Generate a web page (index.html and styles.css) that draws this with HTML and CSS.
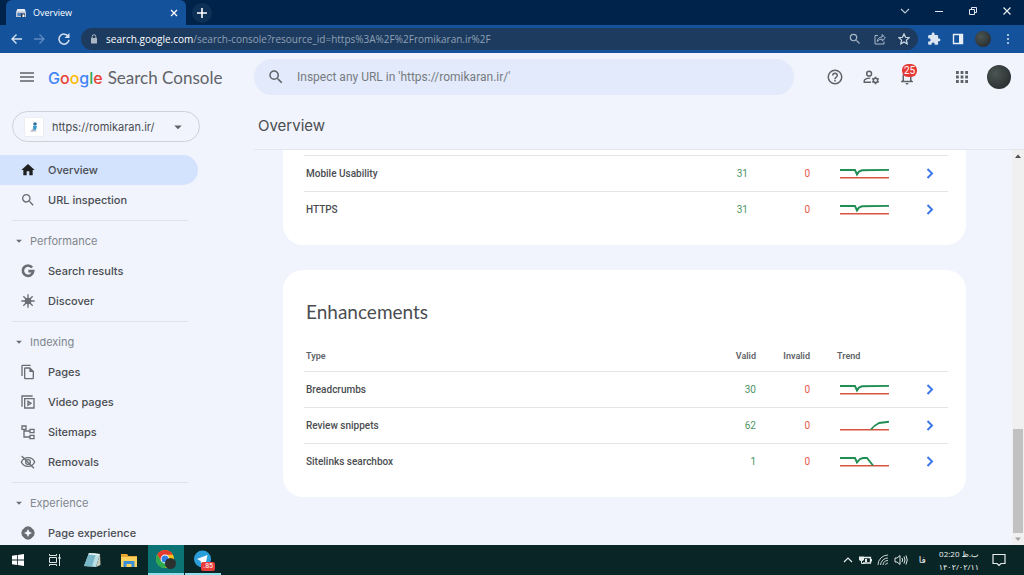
FILE: index.html
```html
<!DOCTYPE html>
<html lang="en">
<head>
<meta charset="utf-8">
<title>Overview</title>
<link rel="stylesheet" href="styles.css">
</head>
<body>
<svg class="defs" aria-hidden="true">
  <symbol id="search" viewBox="0 0 24 24"><path d="M15.5 14h-.79l-.28-.27A6.47 6.47 0 0 0 16 9.5 6.5 6.5 0 1 0 9.5 16c1.61 0 3.09-.59 4.23-1.57l.27.28v.79l5 4.99L20.49 19l-4.99-5zm-6 0C7.01 14 5 11.99 5 9.5S7.01 5 9.5 5 14 7.01 14 9.5 11.99 14 9.5 14z"/></symbol>
  <symbol id="caret" viewBox="0 0 24 24"><path d="M7 10l5 5 5-5z"/></symbol>
  <symbol id="chevron" viewBox="0 0 16 16"><path d="M5.500 3l4.500 4.500L5.500 12" fill="none" stroke="#3b78e7" stroke-width="2"/></symbol>
  <symbol id="trend-dip" viewBox="0 0 52 14"><path d="M3 10.800h49" stroke="#d9543f" stroke-width="1.600"/><path d="M3 3h15l2 4.500 2-3 3-1.200 27-.4" stroke="#1e8e52" stroke-width="1.900" fill="none"/></symbol>
  <symbol id="trend-rise" viewBox="0 0 52 14"><path d="M3 10.800h49" stroke="#d9543f" stroke-width="1.600"/><path d="M34 10.500q3-4 8-6.500l10-1.300" stroke="#1e8e52" stroke-width="1.900" fill="none"/></symbol>
  <symbol id="trend-fall" viewBox="0 0 52 14"><path d="M3 10.800h49" stroke="#d9543f" stroke-width="1.600"/><path d="M3 3h15l2 4.500 3-3.500 3-1h4l6 7.500" stroke="#1e8e52" stroke-width="1.900" fill="none"/></symbol>
</svg>

<div class="tabstrip">
  <div class="tab">
    <svg class="i10" viewBox="0 0 20 20"><path d="M3 2h14l3 6v10H0V8z" fill="#b9c6d6"/><path d="M3 2h14l2 5H1z" fill="#e9eef4"/><path d="M3 10h10v6H3z" fill="#4d7fc4"/><path d="M10 11h8v7h-8z" fill="#23354c"/><path d="M13 13h4v5h-4z" fill="#fff"/></svg>
    <span class="tab-title">Overview</span>
    <button class="bare" aria-label="Close tab"><svg class="i8" viewBox="0 0 8 8"><path d="M1 1l6 6M7 1L1 7" stroke="#fff" stroke-width="1.300"/></svg></button>
  </div>
  <button class="newtab" aria-label="New tab"><svg class="i10" viewBox="0 0 10 10"><path d="M5 0v10M0 5h10" stroke="#fff" stroke-width="1.600"/></svg></button>
  <div class="winctl">
    <button class="bare" aria-label="Search tabs"><svg class="i10" viewBox="0 0 10 10"><path d="M1 3l4 4 4-4" stroke="#b9c4d2" fill="none" stroke-width="1.200"/></svg></button>
    <button class="bare" aria-label="Minimize"><svg class="i10" viewBox="0 0 10 10"><path d="M1 5.500h8" stroke="#dfe5ec"/></svg></button>
    <button class="bare" aria-label="Restore"><svg class="i10" viewBox="0 0 10 10"><path d="M1.500 3.500h5v5h-5zM3.500 3V1.500h5v5H7" stroke="#dfe5ec" fill="none"/></svg></button>
    <button class="bare" aria-label="Close window"><svg class="i10" viewBox="0 0 10 10"><path d="M1.500 1.500l7 7M8.500 1.500l-7 7" stroke="#e6ebf1" stroke-width="1.200"/></svg></button>
  </div>
</div>

<div class="toolbar">
  <div class="navbtns">
    <button class="bare" aria-label="Back"><svg class="i12" viewBox="0 0 12 12"><path d="M12 6H2M6.500 1.500L2 6l4.500 4.500" stroke="#d6e1ef" fill="none" stroke-width="1.400"/></svg></button>
    <button class="bare" aria-label="Forward"><svg class="i12" viewBox="0 0 12 12"><path d="M0 6h10M5.500 1.500L10 6l-4.500 4.500" stroke="#5f8bc0" fill="none" stroke-width="1.300"/></svg></button>
    <button class="bare" aria-label="Reload"><svg class="i12" viewBox="0 0 12 12"><path d="M10.300 3.500A5 5 0 1 0 11 6.800" stroke="#d6e1ef" fill="none" stroke-width="1.500"/><path d="M11.500 0v5h-5z" fill="#d6e1ef"/></svg></button>
  </div>
  <div class="omnibox">
    <svg class="i10" viewBox="0 0 10 10"><path d="M2 4h6v5.500H2z" fill="#aab6c4"/><path d="M3.200 4V2.500a1.800 1.800 0 0 1 3.600 0V4" stroke="#aab6c4" fill="none"/></svg>
    <span class="url"><b>search.google.com</b>/search-console?resource_id=https%3A%2F%2Fromikaran.ir%2F</span>
    <button class="bare" aria-label="Zoom"><svg class="i14" fill="#a9b8c9"><use href="#search"/></svg></button>
    <button class="bare" aria-label="Share"><svg class="i12" viewBox="0 0 12 12"><path d="M4 2.500H1v8.500h9V8.500M3.200 8.500q.3-4.200 5-4.500V1.500L11.300 5 8.200 8V6Q5 6 3.200 8.500z" stroke="#a9b8c9" fill="none"/></svg></button>
    <button class="bare" aria-label="Bookmark"><svg class="i12" viewBox="0 0 12 12"><path d="M6 1l1.500 3.300 3.600.4-2.700 2.400.8 3.600L6 8.900l-3.200 1.800.8-3.600L.9 4.700l3.600-.4z" stroke="#d3dce6" fill="none" stroke-width="1.200"/></svg></button>
  </div>
  <div class="ext">
    <button class="bare" aria-label="Extensions"><svg class="i14" viewBox="0 0 24 24"><path fill="#dce6f2" d="M20.500 11H19V7a2 2 0 0 0-2-2h-4V3.500a2.500 2.500 0 0 0-5 0V5H4a2 2 0 0 0-2 2v3.800h1.500a2.700 2.700 0 0 1 0 5.400H2V20c0 1.100.9 2 2 2h3.800v-1.500a2.700 2.700 0 0 1 5.400 0V22H17a2 2 0 0 0 2-2v-4h1.500a2.500 2.500 0 0 0 0-5z"/></svg></button>
    <button class="bare" aria-label="Side panel"><svg class="i12" viewBox="0 0 12 12"><path d="M1.500 1.500h9v9h-9z" stroke="#e8eef6" stroke-width="1.400" fill="none"/><path d="M7 1.500h4v9H7z" fill="#e8eef6"/></svg></button>
    <span class="avatar small"></span>
    <button class="bare" aria-label="Menu"><svg class="i12" viewBox="0 0 12 12" fill="#cbd9ea"><circle cx="6" cy="2" r="1.100"/><circle cx="6" cy="6" r="1.100"/><circle cx="6" cy="10" r="1.100"/></svg></button>
  </div>
</div>

<div class="app">
  <header class="appbar">
    <div class="brand">
      <button class="bare" aria-label="Main menu"><svg class="i14" viewBox="0 0 14 14"><path d="M0 3h14M0 7h14M0 11h14" stroke="#5f6368" stroke-width="1.500"/></svg></button>
      <span class="logo"><span class="google"><i class="blue">G</i><i class="red">o</i><i class="yellow">o</i><i class="blue">g</i><i class="green">l</i><i class="red">e</i></span><span>Search Console</span></span>
    </div>
    <label class="inspect">
      <svg class="i18" fill="#5f6368"><use href="#search"/></svg>
      <input type="text" aria-label="Inspect URL" placeholder="Inspect any URL in 'https://romikaran.ir/'">
    </label>
    <div class="actions">
      <button class="bare" aria-label="Help"><svg class="i18" viewBox="0 0 24 24" fill="#5f6368"><path d="M11 18h2v-2h-2v2zm1-16a10 10 0 1 0 0 20 10 10 0 0 0 0-20zm0 18a8 8 0 1 1 0-16 8 8 0 0 1 0 16zm0-14a4 4 0 0 0-4 4h2a2 2 0 1 1 4 0c0 2-3 1.750-3 5h2c0-2.250 3-2.500 3-5a4 4 0 0 0-4-4z"/></svg></button>
      <button class="bare" aria-label="Users and settings"><svg class="i18" viewBox="0 0 24 24" fill="none" stroke="#5f6368" stroke-width="2"><circle cx="9.500" cy="7.500" r="3.200"/><path d="M12 19H3v-2q0-3 8-3.500"/><circle cx="18" cy="16.500" r="2.800"/><path d="M18 11.500v2M18 19.500v2M13.700 14l1.700 1M20.600 18l1.700 1M13.700 19l1.700-1M20.600 15l1.700-1" stroke-width="2.200"/></svg></button>
      <button class="bare bell" aria-label="Notifications"><svg class="i18" viewBox="0 0 24 24" fill="#5f6368"><path d="M12 22a2 2 0 0 0 2-2h-4a2 2 0 0 0 2 2zm6-6v-5c0-3.070-1.630-5.640-4.500-6.320V4a1.500 1.500 0 0 0-3 0v.68C7.640 5.360 6 7.920 6 11v5l-2 2v1h16v-1l-2-2zm-2 1H8v-6c0-2.480 1.510-4.500 4-4.500s4 2.020 4 4.500v6z"/></svg><span class="badge">25</span></button>
      <button class="bare apps" aria-label="Google apps"><svg class="i14" viewBox="0 0 14 14"><path d="M1 2.500h12M1 7h12M1 11.500h12" stroke="#5f6368" stroke-width="2.800" stroke-dasharray="2.800 1.800"/></svg></button>
      <span class="avatar"></span>
    </div>
  </header>

  <div class="body">
    <nav class="side">
      <button class="property">
        <span class="favicon"><svg class="i12" viewBox="0 0 12 12"><circle cx="7" cy="3" r="1.800" fill="#2b6f9e"/><path d="M5 5h4l-1 4H5z" fill="#3d9ccb"/><path d="M2 10.500l3-3 4 3z" fill="#a9b4c8"/></svg></span>
        <span class="site">https://romikaran.ir/</span>
        <svg class="i18" fill="#5f6368"><use href="#caret"/></svg>
      </button>
      <a class="item active" href="#"><svg class="i16" viewBox="0 0 24 24"><path d="M10 20v-6h4v6h5v-8h3L12 3 2 12h3v8z"/></svg>Overview</a>
      <a class="item" href="#"><svg class="i16"><use href="#search"/></svg>URL inspection</a>
      <hr>
      <h2 class="group"><svg class="i14"><use href="#caret"/></svg>Performance</h2>
      <a class="item" href="#"><svg class="i16 line bold" viewBox="0 0 24 24"><path d="M18.200 6.800A7.800 7.800 0 1 0 19.800 12.300H12.500"/></svg>Search results</a>
      <a class="item" href="#"><svg class="i16 line" viewBox="0 0 24 24"><path d="M12 2v20M2 12h20M5 5l14 14M19 5L5 19"/><circle cx="12" cy="12" r="4"/></svg>Discover</a>
      <hr>
      <h2 class="group"><svg class="i14"><use href="#caret"/></svg>Indexing</h2>
      <a class="item" href="#"><svg class="i16" viewBox="0 0 24 24"><path d="M16 1H4a2 2 0 0 0-2 2v15h2V3h12V1zm-1 4H8a2 2 0 0 0-2 2v14c0 1.100.9 2 2 2h11a2 2 0 0 0 2-2V11l-6-6zM8 21V7h6v5h5v9H8z"/></svg>Pages</a>
      <a class="item" href="#"><svg class="i16 line" viewBox="0 0 24 24"><path d="M3 19V3h16M7 7h14v14H7z"/><path d="M12 11l4.500 3-4.500 3z"/></svg>Video pages</a>
      <a class="item" href="#"><svg class="i16 line" viewBox="0 0 24 24"><path d="M3 3h6v5H3zM15 8h6v5h-6zM15 17h6v5h-6zM6 8v11.500h9M6 10.500h9"/></svg>Sitemaps</a>
      <a class="item" href="#"><svg class="i16 line" viewBox="0 0 24 24"><path d="M12 5.500c-5 0-8.500 3-10 6.500 1.500 3.500 5 6.500 10 6.500s8.500-3 10-6.500c-1.500-3.500-5-6.500-10-6.500z"/><circle cx="12" cy="12" r="3.500"/><path d="M2.500 3L21 21.500"/></svg>Removals</a>
      <hr>
      <h2 class="group"><svg class="i14"><use href="#caret"/></svg>Experience</h2>
      <a class="item" href="#"><svg class="i16" viewBox="0 0 24 24"><path fill-rule="evenodd" d="M12 2l4 1 5 5 1 4-1 4-5 5-4 1-4-1-5-5-1-4 1-4 5-5zm0 4l-2 4-4 2 4 2 2 4 2-4 4-2-4-2z"/></svg>Page experience</a>
    </nav>

    <main class="main">
      <h1 class="page-title">Overview</h1>
      <div class="viewport">
        <div class="content">
          <section class="card first">
            <table class="report">
              <colgroup><col><col class="c-valid"><col class="c-invalid"><col class="c-trend"><col class="c-go"></colgroup>
              <tbody>
                <tr><td>Mobile Usability</td><td class="valid">31</td><td class="invalid">0</td><td><svg class="trend"><use href="#trend-dip"/></svg></td><td class="go"><a href="#" aria-label="Open Mobile Usability"><svg class="i16"><use href="#chevron"/></svg></a></td></tr>
                <tr><td>HTTPS</td><td class="valid">31</td><td class="invalid">0</td><td><svg class="trend"><use href="#trend-dip"/></svg></td><td class="go"><a href="#" aria-label="Open HTTPS"><svg class="i16"><use href="#chevron"/></svg></a></td></tr>
              </tbody>
            </table>
          </section>
          <section class="card">
            <h2 class="card-title">Enhancements</h2>
            <table class="report">
              <colgroup><col><col class="c-valid"><col class="c-invalid"><col class="c-trend"><col class="c-go"></colgroup>
              <thead><tr><th>Type</th><th class="valid">Valid</th><th class="invalid">Invalid</th><th>Trend</th><th></th></tr></thead>
              <tbody>
                <tr><td>Breadcrumbs</td><td class="valid">30</td><td class="invalid">0</td><td><svg class="trend"><use href="#trend-dip"/></svg></td><td class="go"><a href="#" aria-label="Open Breadcrumbs"><svg class="i16"><use href="#chevron"/></svg></a></td></tr>
                <tr><td>Review snippets</td><td class="valid">62</td><td class="invalid">0</td><td><svg class="trend"><use href="#trend-rise"/></svg></td><td class="go"><a href="#" aria-label="Open Review snippets"><svg class="i16"><use href="#chevron"/></svg></a></td></tr>
                <tr><td>Sitelinks searchbox</td><td class="valid">1</td><td class="invalid">0</td><td><svg class="trend"><use href="#trend-fall"/></svg></td><td class="go"><a href="#" aria-label="Open Sitelinks searchbox"><svg class="i16"><use href="#chevron"/></svg></a></td></tr>
              </tbody>
            </table>
          </section>
        </div>
        <div class="scrollbar">
          <svg class="i12" viewBox="0 0 12 12"><path d="M3 8h6L6 4.500z" fill="#505050"/></svg>
          <div class="thumb"></div>
          <svg class="i12" viewBox="0 0 12 12"><path d="M3 4.500h6L6 8z" fill="#a3a3a3"/></svg>
        </div>
      </div>
    </main>
  </div>
</div>

<footer class="taskbar">
  <button class="task" aria-label="Start"><svg class="i14" viewBox="0 0 14 14" fill="#fff"><path d="M1 2.800l5-.7v4.500H1zM6.800 2L13 1v5.600H6.800zM1 7.400h5v4.500l-5-.7zM6.800 7.400H13V13l-6.200-1z"/></svg></button>
  <button class="task" aria-label="Task view"><svg class="i14" viewBox="0 0 14 14" stroke="#dfe6e6" fill="none"><path d="M1.500 4.500h7v5h-7zM1.500 1v1.500h7V1M1.500 13v-1.500h7V13M11.500 1v12"/><path d="M10.500 5h2" stroke-width="2"/></svg></button>
  <button class="task" aria-label="Notepad"><svg class="i18" viewBox="0 0 18 18"><path d="M6 2l11 1-4 13-12-1z" fill="#b9dfe6"/><path d="M6 2l7 .6-4 12.800-8-.4z" fill="#78b7c7"/><path d="M6 2l11 1-.5 1.500-11-1z" fill="#e9f3ee"/><path d="M17 3l.5 11-4.500 2z" fill="#c6ccb9"/></svg></button>
  <button class="task" aria-label="File Explorer"><svg class="i18" viewBox="0 0 18 18"><path d="M1 3h6l1.500 2H17v11H1z" fill="#e8a72f"/><path d="M1 6h16v10H1z" fill="#fbd25e"/><path d="M3.500 10h11v6h-3v-3h-5v3h-3z" fill="#3c8fd6"/></svg></button>
  <button class="task current" aria-label="Chrome"><svg class="i20" viewBox="0 0 20 20"><circle cx="9" cy="10" r="9" fill="#fbc116"/><path d="M1.200 5.500A9 9 0 0 1 16.800 5.500L9 6 5 12z" fill="#e33b2e"/><path d="M1.200 5.500A9 9 0 0 0 9 19l3.500-6L5 12z" fill="#2da94f"/><circle cx="9" cy="10" r="4.400" fill="#fff"/><circle cx="9" cy="10" r="3.500" fill="#2f7de1"/><circle cx="14.500" cy="14.500" r="5.500" fill="#2c3130"/></svg></button>
  <button class="task open" aria-label="Telegram"><svg class="i18" viewBox="0 0 18 18"><circle cx="8.500" cy="9" r="8.500" fill="#2b9fd9"/><path d="M3 9l10.500-4-2 9.500-3-2.200-1.500 1.500-.3-2.800z" fill="#fff"/></svg><span class="unread">.85</span></button>
  <div class="tray">
    <svg class="i10" viewBox="0 0 10 10"><path d="M1 7l4-4 4 4" stroke="#e6ecec" fill="none" stroke-width="1.200"/></svg>
    <svg class="i14" viewBox="0 0 14 14"><path d="M6 4.500h6.500v5.500H5" stroke="#e6ecec" fill="none" stroke-width="1.300"/><path d="M13 6h1v2.500h-1z" fill="#e6ecec"/><path d="M1 3.500h5V7L3.500 8.500 1 7z" fill="#e6ecec"/><path d="M3.500 8v2.500h3" stroke="#e6ecec" fill="none"/><path d="M7 6h2v3H7z" fill="#e6ecec"/></svg>
    <svg class="i12" viewBox="0 0 12 12" stroke="#c8d0d0" fill="none"><path d="M1 11A10 10 0 0 1 11 1M3.500 11A7.500 7.500 0 0 1 11 4M6 11a5 5 0 0 1 5-4.500M8.500 11a2.500 2.500 0 0 1 2.500-2"/></svg>
    <svg class="i14" viewBox="0 0 14 14" stroke="#dfe6e6" fill="none"><path d="M1 5h2l3-2.500v9L3 9H1zM8 5q1.200 2 0 4M10 3.500q2 3.500 0 7M12 2.500q2.500 4.500 0 9"/></svg>
    <span class="lang" lang="fa">فا</span>
    <div class="clock" lang="fa"><span dir="rtl">ب.ظ 02:20</span><span>۱۴۰۲/۰۲/۱۱</span></div>
    <svg class="i14" viewBox="0 0 14 14"><path d="M1 1.500h12v9H9L7 12.500l-2-2H1z" stroke="#e6ecec" fill="none" stroke-width="1.200"/></svg>
  </div>
</footer>
</body>
</html>
```
FILE: styles.css
```css
* { box-sizing: border-box; }
body {
  margin: 0;
  height: 100vh;
  display: flex;
  flex-direction: column;
  overflow: hidden;
  font-family: Roboto, "Liberation Sans", sans-serif;
  font-size: 12px;
  color: #4a4d51;
  background: #f1f4fd;
}
button, input { font: inherit; color: inherit; }
a { color: inherit; text-decoration: none; }
svg { flex: none; display: block; }
.defs { display: none; }
.i8 { width: 8px; height: 8px; }
.i10 { width: 10px; height: 10px; }
.i12 { width: 12px; height: 12px; }
.i14 { width: 14px; height: 14px; }
.i16 { width: 16px; height: 16px; }
.i18 { width: 18px; height: 18px; }
.i20 { width: 20px; height: 20px; }
.bare {
  display: flex;
  align-items: center;
  justify-content: center;
  padding: 0;
  border: 0;
  background: none;
}

/* Browser chrome */
.tabstrip {
  display: flex;
  align-items: center;
  height: 25px;
  flex: none;
  padding: 0 12px 0 6px;
  background: #00234b;
}
.tab {
  display: flex;
  align-items: center;
  gap: 7px;
  width: 180px;
  height: 25px;
  padding: 0 8px 0 10px;
  border-radius: 6px 6px 0 0;
  background: #14529b;
  color: #fff;
  font: 9px "Open Sans", sans-serif;
}
.tab-title { flex: 1; }
.newtab {
  display: flex;
  align-items: center;
  justify-content: center;
  width: 20px;
  height: 20px;
  margin-left: 6px;
  padding: 0;
  border: 0;
  border-radius: 50%;
  background: #0d3057;
}
.winctl { display: flex; gap: 24px; margin-left: auto; padding-bottom: 4px; }
.toolbar {
  display: flex;
  align-items: center;
  height: 28px;
  flex: none;
  padding: 0 10px;
  background: #14529b;
}
.navbtns { display: flex; gap: 12px; width: 71px; }
.omnibox {
  flex: 1;
  display: flex;
  align-items: center;
  gap: 12px;
  height: 22px;
  padding: 0 8px;
  border-radius: 11px;
  background: #1d3b5f;
}
.url {
  flex: 1;
  margin-left: -5px;
  color: #8fa1b6;
  font: 10px "Open Sans", sans-serif;
}
.url b { color: #fff; font-weight: 400; }
.ext { display: flex; align-items: center; gap: 11px; margin-left: 9px; }
.avatar {
  width: 24px;
  height: 24px;
  border-radius: 50%;
  background: radial-gradient(circle at 35% 35%, #4b5552, #2b3032 75%);
}
.avatar.small { width: 16px; height: 16px; }

/* Application bar */
.app { flex: 1; min-height: 0; display: flex; flex-direction: column; }
.appbar {
  display: flex;
  align-items: center;
  height: 48px;
  flex: none;
  padding-right: 13px;
}
.brand { display: flex; align-items: center; gap: 14px; width: 254px; padding-left: 20px; }
.logo {
  display: flex;
  gap: 5px;
  align-items: baseline;
  color: #5f6368;
  font: 17px Lato, sans-serif;
}
.google { font: 500 16px Inter, sans-serif; }
.google i { font-style: normal; }
.blue { color: #4285f4; }
.red { color: #ea4335; }
.yellow { color: #fbbc04; }
.green { color: #34a853; }
.inspect {
  flex: 0 1 540px;
  display: flex;
  align-items: center;
  gap: 12px;
  height: 36px;
  padding: 0 13px;
  border-radius: 18px;
  background: #e2eafb;
}
.inspect input { flex: 1; border: 0; padding: 0; outline: 0; background: none; }
.inspect input::placeholder { color: #777b80; opacity: 1; }
.actions { display: flex; align-items: center; gap: 18px; margin-left: auto; }
.bell { position: relative; }
.badge {
  position: absolute;
  left: 4px;
  top: -4px;
  padding: 0 2px;
  border-radius: 6px;
  background: #e53935;
  color: #fff;
  font-size: 10px;
  line-height: 13px;
}
.apps { margin-left: 21px; }

/* Sidebar */
.body { flex: 1; min-height: 0; display: flex; }
.side { width: 254px; flex: none; overflow: hidden; padding-top: 10px; }
.property {
  display: flex;
  align-items: center;
  gap: 8px;
  width: 188px;
  height: 31px;
  margin: 0 0 13px 12px;
  padding: 0 12px 0 11px;
  border: 1px solid #cfd1d8;
  border-radius: 16px;
  background: none;
  text-align: left;
}
.favicon { padding: 3px; background: #fff; border: 1px solid #eceef3; }
.site { flex: 1; font-size: 11px; font-family: Inter, sans-serif; }
.item {
  display: flex;
  align-items: center;
  gap: 12px;
  width: 198px;
  height: 30px;
  padding-left: 20px;
  border-radius: 0 15px 15px 0;
  font: 500 11px Inter, sans-serif;
}
.item svg, .group svg { fill: #6a6e73; }
.item .line { fill: none; stroke: #6a6e73; stroke-width: 2; }
.item .bold { stroke-width: 4; }
.item.active { background: #d3e2fd; }
.item.active svg { fill: #1f1f1f; }
.side hr { width: 176px; margin: 5px 0 5px 12px; border: 0; border-top: 1px solid #dfe1e8; }
.group {
  display: flex;
  align-items: center;
  gap: 4px;
  height: 30px;
  margin: 0;
  padding-left: 12px;
  color: #80868b;
  font: 11px Inter, sans-serif;
}

/* Main column */
.main { flex: 1; min-width: 0; display: flex; flex-direction: column; }
.page-title {
  height: 49px;
  flex: none;
  margin: 0;
  padding-left: 4px;
  border-bottom: 1px solid #e4e6ed;
  font: 15px/49px Inter, sans-serif;
}
.viewport { flex: 1; min-height: 0; display: flex; }
.content { flex: 1; overflow: hidden; padding: 0 46px 0 29px; }
.card {
  margin-bottom: 25px;
  padding: 27px 18px 17px 21px;
  border-radius: 20px;
  background: #fff;
}
.card.first { padding-top: 5px; border-radius: 0 0 20px 20px; }
.card-title {
  margin: 0 0 14px;
  padding-left: 2px;
  font: 19px/30px Lato, sans-serif;
}
.report { width: 100%; table-layout: fixed; border-collapse: collapse; font-size: 10px; }
.c-valid { width: 80px; }
.c-invalid { width: 81px; }
.c-trend { width: 75px; }
.c-go { width: 36px; }
.report td, .report th { padding: 0 0 0 2px; text-align: left; font-weight: 500; }
.report td { height: 36px; border-top: 1px solid #e4e5e7; }
.report th { height: 31px; padding-left: 0; color: #5f6368; font-size: 9px; font-weight: 600; }
.report th:first-child { padding-left: 2px; }
.report td:nth-child(4) { padding-left: 0; }
.report .valid { text-align: right; }
.report .invalid { text-align: right; padding-right: 27px; }
.report td.valid { color: #4c9465; font-weight: 400; }
.report td.invalid { color: #e8574b; font-weight: 400; }
.first .valid { padding-right: 8px; }
.trend { width: 52px; height: 14px; }
.report .go { padding-left: 10px; }
.scrollbar { display: flex; flex-direction: column; width: 12px; background: #f0f0f1; }
.thumb { height: 104px; margin: auto 1px 0; background: #c1c1c1; }

/* Taskbar */
.taskbar { display: flex; height: 30px; flex: none; background: #0a2526; }
.task {
  position: relative;
  display: flex;
  align-items: center;
  justify-content: center;
  width: 36px;
  margin-right: 1px;
  padding: 0;
  border: 0;
  background: none;
}
.current { background: #0b7374; border-bottom: 2px solid #8fe0ea; }
.open { border-bottom: 2px solid #8fe0ea; }
.unread {
  position: absolute;
  right: 6px;
  bottom: 2px;
  padding: 0 2px;
  border-radius: 2px;
  background: #e93d3d;
  color: #fff;
  font-size: 7px;
  line-height: 9px;
}
.tray {
  display: flex;
  align-items: center;
  gap: 5px;
  margin-left: auto;
  padding-right: 18px;
  color: #eef3f3;
}
.lang { margin: 0 8px 0 6px; font: 9px "DejaVu Sans", sans-serif; }
.clock {
  display: flex;
  flex-direction: column;
  align-items: center;
  margin-right: 8px;
  font: 8px/13px "Open Sans", "DejaVu Sans", sans-serif;
}
```
